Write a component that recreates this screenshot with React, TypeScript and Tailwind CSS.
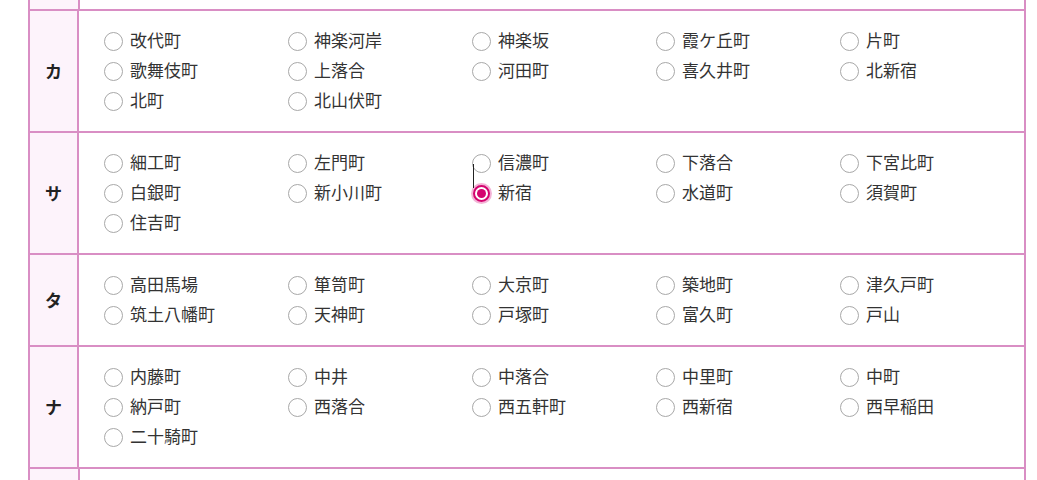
import React from 'react';

type Section = { head: string; items: string[] };

const sections: Section[] = [
  {
    head: 'カ',
    items: ['改代町', '神楽河岸', '神楽坂', '霞ケ丘町', '片町', '歌舞伎町', '上落合', '河田町', '喜久井町', '北新宿', '北町', '北山伏町'],
  },
  {
    head: 'サ',
    items: ['細工町', '左門町', '信濃町', '下落合', '下宮比町', '白銀町', '新小川町', '新宿', '水道町', '須賀町', '住吉町'],
  },
  {
    head: 'タ',
    items: ['高田馬場', '箪笥町', '大京町', '築地町', '津久戸町', '筑土八幡町', '天神町', '戸塚町', '富久町', '戸山'],
  },
  {
    head: 'ナ',
    items: ['内藤町', '中井', '中落合', '中里町', '中町', '納戸町', '西落合', '西五軒町', '西新宿', '西早稲田', '二十騎町'],
  },
];

const Radio: React.FC<{ checked?: boolean }> = ({ checked }) =>
  checked ? (
    <span className="relative flex h-[21px] w-[21px] shrink-0 items-center justify-center rounded-full bg-[#f3b3d6] -ml-[1px] mr-[-1px]">
      <span className="flex h-[17px] w-[17px] items-center justify-center rounded-full border-2 border-[#d4046f] bg-white">
        <span className="h-[9px] w-[9px] rounded-full bg-[#d4046f]" />
      </span>
    </span>
  ) : (
    <span className="h-[19px] w-[19px] shrink-0 rounded-full border border-[#a8a8a8] bg-white" />
  );

export default function App() {
  return (
    <div className="min-h-[480px] bg-white font-['Noto_Sans_CJK_JP','Noto_Sans',sans-serif] text-[#333]">
      <div className="ml-[28px] w-[998px] border-x-2 border-[#d98ec4]">
        <div className="flex h-[9px]">
          <div className="w-[50px] border-r-2 border-[#d98ec4] bg-[#fdf3fb]" />
          <div className="flex-1" />
        </div>
        {sections.map((s) => (
          <div key={s.head} className="flex border-t-2 border-[#d98ec4]">
            <div className="flex w-[50px] items-center justify-center border-r-2 border-[#d98ec4] bg-[#fdf3fb] text-[17px] font-bold text-[#222]">
              {s.head}
            </div>
            <div className="grid flex-1 grid-cols-[184px_184px_184px_184px_184px] py-[15px] pl-[25px]">
              {s.items.map((name) => (
                <label key={name} className="relative flex h-[30px] items-center gap-[7px] text-[17px] leading-none">
                  <Radio checked={name === '新宿'} />
                  {name === '新宿' && (
                    <span className="absolute left-[1px] top-[-14px] h-[24px] w-[1px] bg-[#222]" />
                  )}
                  <span className="-mt-[3px]">{name}</span>
                </label>
              ))}
            </div>
          </div>
        ))}
        <div className="flex h-[14px] border-t-2 border-[#d98ec4]">
          <div className="w-[50px] border-r-2 border-[#d98ec4] bg-[#fdf3fb]" />
          <div className="flex-1" />
        </div>
      </div>
    </div>
  );
}
